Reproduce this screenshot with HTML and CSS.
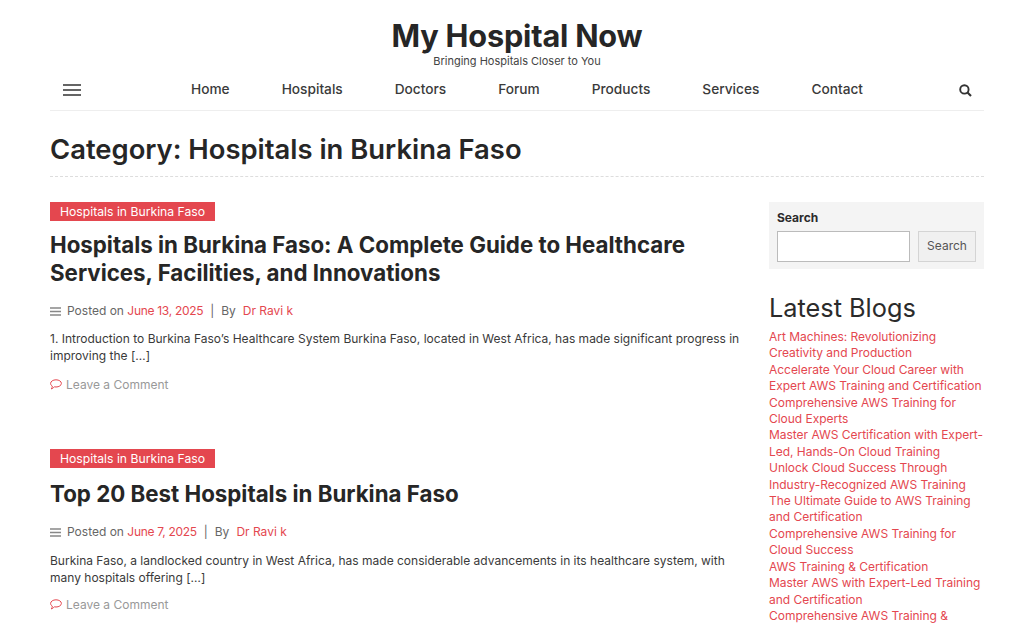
FILE: index.html
```html
<!DOCTYPE html>
<html>
<head>
    <meta charset="utf-8">
    <meta name="viewport" content="width=device-width, initial-scale=1">
    <title>Hospitals in Burkina Faso - My Hospital Now</title>
    <link rel="stylesheet" href="styles.css">
</head>

<body>
    <header class="site-header">
        <div class="branding">
            <h1 class="site-title">My Hospital Now</h1>
            <p class="tagline">Bringing Hospitals Closer to You</p>
        </div>
        <nav class="main-nav">
            <button class="icon-btn" aria-label="Menu">
                <svg width="18" height="12" viewBox="0 0 18 12"><path d="M0 1h18M0 6h18M0 11h18" stroke="#333" stroke-width="1.3" fill="none"/></svg>
            </button>
            <ul class="nav-links">
                <li><a href="#">Home</a></li>
                <li><a href="#">Hospitals</a></li>
                <li><a href="#">Doctors</a></li>
                <li><a href="#">Forum</a></li>
                <li><a href="#">Products</a></li>
                <li><a href="#">Services</a></li>
                <li><a href="#">Contact</a></li>
            </ul>
            <button class="icon-btn" aria-label="Search">
                <svg width="13" height="13" viewBox="0 0 13 13"><circle cx="5.4" cy="5.4" r="4.2" stroke="#333" stroke-width="1.9" fill="none"/><path d="M8.5 8.5L12 12" stroke="#333" stroke-width="2.1" fill="none"/></svg>
            </button>
        </nav>
    </header>

    <div class="page-head">
        <h2 class="page-title">Category: Hospitals in Burkina Faso</h2>
    </div>

    <div class="content">
        <main class="posts">
            <article class="post">
                <a class="cat-tag" href="#">Hospitals in Burkina Faso</a>
                <h2 class="post-title">Hospitals in Burkina Faso: A Complete Guide to Healthcare Services, Facilities, and Innovations</h2>
                <div class="post-meta">
                    <svg class="meta-icon" width="11" height="9" viewBox="0 0 11 9"><path d="M0 1h11M0 4.5h11M0 8h11" stroke="#888" stroke-width="1.4" fill="none"/></svg>
                    <span>Posted on <a class="post-date" href="#">June 13, 2025</a></span>
                    <span class="sep">|</span>
                    <span>By</span>
                    <a class="author" href="#">Dr Ravi k</a>
                </div>
                <p class="excerpt">1. Introduction to Burkina Faso’s Healthcare System Burkina Faso, located in West Africa, has made significant progress in improving the […]</p>
                <div class="comment-link">
                    <svg width="12" height="11" viewBox="0 0 12 11"><path d="M6 .8c3 0 5.4 1.600 5.400 3.600S9 8 6 8c-.6 0-1.200-.1-1.700-.2C3.500 8.700 2.400 9.800 1.300 9.900c.6-.7 1-1.700 1-2.800C1.200 6.500.6 5.500.6 4.400.6 2.400 3 .8 6 .8z" stroke="#e4474f" stroke-width="1" fill="none"/></svg>
                    <a href="#">Leave a Comment</a>
                </div>
            </article>

            <article class="post">
                <a class="cat-tag" href="#">Hospitals in Burkina Faso</a>
                <h2 class="post-title">Top 20 Best Hospitals in Burkina Faso</h2>
                <div class="post-meta">
                    <svg class="meta-icon" width="11" height="9" viewBox="0 0 11 9"><path d="M0 1h11M0 4.5h11M0 8h11" stroke="#888" stroke-width="1.4" fill="none"/></svg>
                    <span>Posted on <a class="post-date" href="#">June 7, 2025</a></span>
                    <span class="sep">|</span>
                    <span>By</span>
                    <a class="author" href="#">Dr Ravi k</a>
                </div>
                <p class="excerpt">Burkina Faso, a landlocked country in West Africa, has made considerable advancements in its healthcare system, with many hospitals offering […]</p>
                <div class="comment-link">
                    <svg width="12" height="11" viewBox="0 0 12 11"><path d="M6 .8c3 0 5.4 1.600 5.400 3.600S9 8 6 8c-.6 0-1.200-.1-1.700-.2C3.500 8.700 2.400 9.800 1.300 9.900c.6-.7 1-1.700 1-2.800C1.200 6.500.6 5.500.6 4.400.6 2.400 3 .8 6 .8z" stroke="#e4474f" stroke-width="1" fill="none"/></svg>
                    <a href="#">Leave a Comment</a>
                </div>
            </article>
        </main>

        <aside class="sidebar">
            <form class="search-box">
                <label class="search-label">Search</label>
                <div class="search-row">
                    <input class="search-input" type="text">
                    <button class="search-btn" type="button">Search</button>
                </div>
            </form>
            <h2 class="widget-title">Latest Blogs</h2>
            <ul class="blog-list">
                <li><a href="#">Art Machines: Revolutionizing Creativity and Production</a></li>
                <li><a href="#">Accelerate Your Cloud Career with Expert AWS Training and Certification</a></li>
                <li><a href="#">Comprehensive AWS Training for Cloud Experts</a></li>
                <li><a href="#">Master AWS Certification with Expert-Led, Hands-On Cloud Training</a></li>
                <li><a href="#">Unlock Cloud Success Through Industry-Recognized AWS Training</a></li>
                <li><a href="#">The Ultimate Guide to AWS Training and Certification</a></li>
                <li><a href="#">Comprehensive AWS Training for Cloud Success</a></li>
                <li><a href="#">AWS Training &amp; Certification</a></li>
                <li><a href="#">Master AWS with Expert-Led Training and Certification</a></li>
                <li><a href="#">Comprehensive AWS Training &amp; Certification</a></li>
            </ul>
        </aside>
    </div>
</body>
</html>
```

FILE: styles.css
```css
html, body {
    margin: 0;
    padding: 0;
    height: 626px;
    overflow: hidden;
}

body {
    background: #fff;
    color: #2b2b2b;
    font-family: "Inter", "Open Sans", sans-serif;
    padding: 0 40px 0 50px;
}

a {
    color: #e4474f;
    text-decoration: none;
}

/* header */
.branding {
    text-align: center;
    padding-top: 18px;
}

.site-title {
    margin: 0;
    font-size: 30.700px;
    line-height: 36px;
    font-weight: 700;
    letter-spacing: -0.2px;
    color: #262626;
}

.tagline {
    margin: 0;
    font-size: 11px;
    line-height: 15px;
    color: #444;
}

.main-nav {
    display: flex;
    align-items: center;
    height: 40px;
    margin-top: 1px;
    border-bottom: 1px solid #eee;
    padding: 0 12px 0 13px;
    justify-content: space-between;
}

.icon-btn {
    background: none;
    border: 0;
    padding: 0;
    display: flex;
}

.nav-links {
    display: flex;
    gap: 52px;
    list-style: none;
    margin: 0 0 0 14px;
    padding: 0 0 5px;
}

.nav-links a {
    color: #3a3a3a;
    font-size: 13.700px;
    font-weight: 500;
}

/* category heading */
.page-head {
    padding: 21px 0 10px;
    border-bottom: 1px dashed #ddd;
}

.page-title {
    margin: 0;
    font-size: 27.400px;
    line-height: 34px;
    font-weight: 600;
    color: #262626;
}

/* columns */
.content {
    display: flex;
    justify-content: space-between;
    padding-top: 25px;
}

.posts {
    width: 692px;
}

.post {
    margin-bottom: 56px;
}

.cat-tag {
    display: block;
    width: fit-content;
    background: #e4474f;
    color: #fff;
    font-size: 12.200px;
    line-height: 19px;
    padding: 0 10px;
}

.post-title {
    margin: 10px 0 0;
    font-size: 22.300px;
    line-height: 28px;
    font-weight: 700;
    color: #262626;
}

.post-meta {
    display: flex;
    align-items: center;
    margin-top: 15px;
    font-size: 12px;
    line-height: 18px;
    color: #666;
}

.post-date {
    letter-spacing: -0.3px;
}

.meta-icon {
    margin-right: 6px;
}

.sep {
    margin: 0 7px;
}

.author {
    margin-left: 7px;
}

.excerpt {
    margin: 11px 0 0;
    font-size: 12px;
    line-height: 16.500px;
    color: #3a3a3a;
}

.comment-link {
    display: flex;
    align-items: center;
    gap: 4px;
    margin-top: 12px;
    font-size: 12px;
    line-height: 17px;
}

.comment-link a {
    color: #999;
}

/* single line title sits a little looser */
.post + .post .post-title {
    margin-top: 12px;
}

.post + .post .excerpt {
    margin-top: 12px;
}

.post + .post .comment-link {
    margin-top: 10px;
}

/* sidebar */
.sidebar {
    width: 215px;
    flex-shrink: 0;
}

.search-box {
    background: #f4f4f4;
    padding: 8px 8px 7px;
}

.search-label {
    display: block;
    font-size: 12px;
    line-height: 16px;
    font-weight: 700;
    color: #2b2b2b;
    margin-bottom: 5px;
}

.search-row {
    display: flex;
    gap: 8px;
}

.search-input {
    flex: 1;
    min-width: 0;
    height: 31px;
    box-sizing: border-box;
    border: 1px solid #bbb;
    background: #fff;
    padding: 0;
}

.search-btn {
    width: 58px;
    height: 31px;
    border: 1px solid #d4d4d4;
    background: #f0f0f0;
    color: #555;
    font-family: inherit;
    font-size: 12px;
    padding: 0 0 2px;
}

.widget-title {
    margin: 23px 0 0;
    font-size: 25.300px;
    line-height: 32px;
    font-weight: 400;
    color: #2b2b2b;
}

.blog-list {
    list-style: none;
    margin: 5px 0 0;
    padding: 0;
    font-size: 12px;
    letter-spacing: -0.03px;
    line-height: 16.400px;
}
```
